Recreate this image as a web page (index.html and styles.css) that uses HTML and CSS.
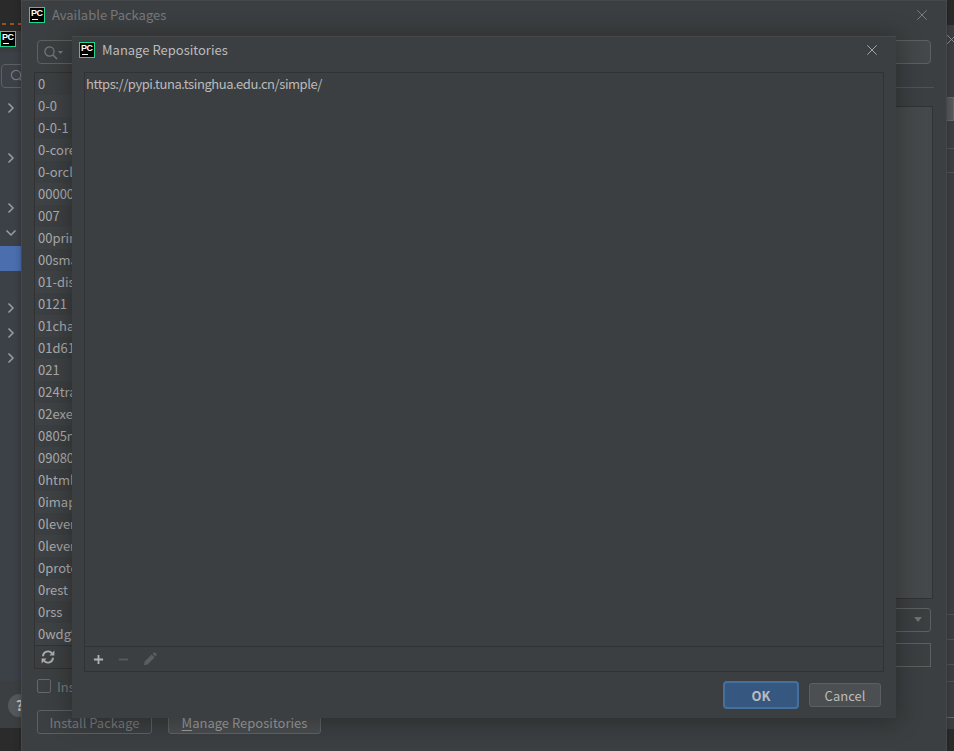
FILE: index.html
```html
<!DOCTYPE html>
<html lang="en">
<head>
<meta charset="utf-8">
<title>Manage Repositories</title>
<link rel="stylesheet" href="styles.css">
</head>
<body>
<svg class="defs" width="0" height="0" aria-hidden="true">
  <symbol id="x" viewBox="0 0 14 14"><path d="M1.5 1.5l11 11M12.5 1.5l-11 11" fill="none" stroke="currentColor" stroke-width="1.1"/></symbol>
  <symbol id="chev" viewBox="0 0 8 12"><path d="M1.5 1.5L6 6l-4.5 4.5" fill="none" stroke="currentColor" stroke-width="1.5"/></symbol>
</svg>

<div class="ide">
  <div class="ide-top"><span class="orange"></span></div>
  <div class="ide-title"><span class="pc pc-ide"><b>PC</b><i></i></span></div>
  <div class="ide-side">
    <span class="side-search"><svg class="side-loupe" viewBox="0 0 14 14"><circle cx="6" cy="6" r="4.6" fill="none" stroke="currentColor" stroke-width="1.2"/><path d="M9.5 9.5l4 4" stroke="currentColor" stroke-width="1.4"/></svg></span>
    <svg class="chev c1"><use href="#chev"/></svg>
    <svg class="chev c2"><use href="#chev"/></svg>
    <svg class="chev c3"><use href="#chev"/></svg>
    <svg class="chev c4" viewBox="0 0 12 8"><path d="M1.5 1.5L6 6l4.5-4.5" fill="none" stroke="currentColor" stroke-width="1.5"/></svg>
    <span class="side-selected"></span>
    <svg class="chev c5"><use href="#chev"/></svg>
    <svg class="chev c6"><use href="#chev"/></svg>
    <svg class="chev c7"><use href="#chev"/></svg>
  </div>
  <div class="ide-foot"><span class="help">?</span></div>
  <div class="ide-bottom"></div>
  <svg class="ide-close"><use href="#x"/></svg>
  <div class="ide-right"><span class="r-btn"></span><span class="r-line l1"></span><span class="r-line l2"></span><span class="r-line l3"></span><span class="r-line l4"></span><span class="r-line l5"></span><span class="r-line l6"></span><span class="r-line l7"></span></div>
</div>

<section class="dialog packages">
  <header class="titlebar">
    <span class="pc"><b>PC</b><i></i></span>
    <span class="title dim">Available Packages</span>
    <svg class="close dimx"><use href="#x"/></svg>
  </header>
  <div class="search">
    <svg class="loupe" viewBox="0 0 20 16"><circle cx="6.5" cy="6.5" r="4.6" fill="none" stroke="currentColor" stroke-width="1.2"/><path d="M10 10l4 4" stroke="currentColor" stroke-width="1.4"/><path d="M15 6h5l-2.5 3z" fill="currentColor"/></svg>
  </div>
  <div class="columns">
    <div class="list-wrap">
      <ul class="pkg-list">
        <li>0</li><li>0-0</li><li>0-0-1</li><li>0-core</li><li>0-orcl</li><li>00000</li><li>007</li><li>00print</li><li>00smalinux</li><li>01-distance</li><li>0121</li><li>01changer</li><li>01d61084</li><li>021</li><li>024travis</li><li>02exercicio</li><li>0805nexter</li><li>09080706</li><li>0html</li><li>0imap</li><li>0lever-so</li><li>0lever-utils</li><li>0proto</li><li>0rest</li><li>0rss</li><li>0wdg9nbm</li>
      </ul>
      <div class="list-tools">
        <svg class="refresh" viewBox="0 0 14 14"><path d="M2 6.2A5 5 0 0 1 11 3.4M12 7.8A5 5 0 0 1 3 10.6" fill="none" stroke="currentColor" stroke-width="1.9"/><path d="M8.4 5.4h5V.6zM5.6 8.6h-5v4.8z" fill="currentColor"/></svg>
      </div>
    </div>
    <div class="detail">
      <div class="detail-rule"></div>
      <div class="detail-box"></div>
      <div class="detail-select"><span class="caret"></span></div>
      <div class="detail-input"></div>
    </div>
  </div>
  <label class="option"><span class="check"></span><span class="option-text">Install to user's site packages directory</span></label>
  <div class="pkg-actions">
    <span class="btn install">Install Package</span>
    <span class="btn manage"><u>M</u>anage Repositories</span>
  </div>
</section>

<section class="dialog repos">
  <header class="titlebar">
    <span class="pc"><b>PC</b><i></i></span>
    <span class="title">Manage Repositories</span>
    <svg class="close"><use href="#x"/></svg>
  </header>
  <div class="repo-panel">
    <div class="repo-list"><div class="repo-row">https://pypi.tuna.tsinghua.edu.cn/simple/</div></div>
    <div class="repo-tools">
      <svg class="tool" viewBox="0 0 12 12"><path d="M6 1v10M1 6h10" stroke="#afb1b3" stroke-width="2"/></svg>
      <svg class="tool" viewBox="0 0 12 12"><path d="M1 6h10" stroke="#57595a" stroke-width="2"/></svg>
      <svg class="tool pencil" viewBox="0 0 14 14"><path d="M1 13.2l.7-3.6 7-7 2.9 2.9-7 7z" fill="#5b5d5e"/><path d="M9.6 1.7l.9-.9a1.2 1.2 0 0 1 1.7 0l1 1a1.2 1.2 0 0 1 0 1.7l-.9.9z" fill="#5b5d5e"/></svg>
    </div>
  </div>
  <footer class="repo-actions">
    <span class="btn ok">OK</span>
    <span class="btn cancel">Cancel</span>
  </footer>
</section>
</body>
</html>
```
FILE: styles.css
```css
* { box-sizing: border-box; }
html, body { margin: 0; height: 100%; }
body {
  position: relative;
  width: 954px;
  height: 751px;
  overflow: hidden;
  background: #3c3f41;
  font-family: "Noto Sans CJK SC", "Noto Sans", sans-serif;
  font-size: 13px;
  color: #bbbbbb;
}
.defs { position: absolute; }

/* background IDE window */
.ide { position: absolute; inset: 0; display: flex; flex-direction: column; }
.ide-top { height: 31px; background: #2a2a2a; position: relative; flex: none; }
.orange { position: absolute; left: 2px; top: 23px; width: 19px; height: 2px; background: repeating-linear-gradient(90deg, #8f5420 0 4px, transparent 4px 8px); }
.ide-title { height: 21px; background: #3a3c3e; flex: none; }
.ide-side { height: 629px; background: #3c4047; position: relative; flex: none; }
.ide-foot { height: 47px; background: #3c3f41; position: relative; flex: none; }
.ide-bottom { flex: 1; background: #2b2b2b; }
.side-search { position: absolute; left: 1px; top: 12px; width: 30px; height: 24px; border: 1px solid #5e6060; border-radius: 4px; }
.side-loupe { position: absolute; left: 8px; top: 4px; width: 14px; height: 14px; color: #77797b; }
.side-selected { position: absolute; left: 0; top: 194px; width: 22px; height: 25px; background: #4b6eaf; }
.chev { position: absolute; left: 7px; width: 8px; height: 12px; color: #9a9c9e; }
.c1 { top: 50px; } .c2 { top: 100px; } .c3 { top: 150px; }
.c4 { top: 177px; left: 5px; width: 12px; height: 8px; }
.c5 { top: 250px; } .c6 { top: 275px; } .c7 { top: 300px; }
.help { position: absolute; left: 8px; top: 13px; width: 23px; height: 23px; border-radius: 50%; background: #55585a; color: #c4c6c8; font-weight: 700; font-size: 14px; line-height: 23px; text-align: center; }
.ide-close { position: absolute; left: 946px; top: 34px; width: 11px; height: 11px; color: #8f9193; z-index: 1; }
.ide-right { position: absolute; left: 947px; top: 25px; right: 0; bottom: 22px; background: #3c3f41; }
.r-btn { position: absolute; left: -1px; top: 72px; width: 8px; height: 24px; background: #55585a; border: 1px solid #64676a; border-left: 0; }
.r-line { position: absolute; left: 0; right: 0; height: 1px; background: #505254; }
.l1 { top: 123px; } .l2 { top: 147px; } .l3 { top: 589px; } .l4 { top: 614px; } .l5 { top: 639px; } .l6 { top: 656px; }
.l7 { top: 692px; background: #66686a; }

/* dialogs */
.dialog { position: absolute; display: flex; flex-direction: column; background: #3c3f41; }
.packages {
  left: 21px; top: 0; width: 926px; height: 751px;
  border: 1px solid #46484a;
  border-bottom: 0;
  box-shadow: 0 0 6px rgba(0,0,0,.3);
}
.repos {
  left: 72px; top: 36px; width: 824px; height: 682px;
  border-top: 1px solid #46484a;
  box-shadow: 0 2px 22px 3px rgba(0,0,0,.28);
}
.titlebar { display: flex; align-items: center; gap: 7px; flex: none; height: 26px; padding: 0 18px 0 7px; }
.title { flex: 1; line-height: 18px; white-space: nowrap; }
.dim { color: #77797b; }
.close { width: 12px; height: 12px; color: #a8aaac; flex: none; }
.dimx { color: #7f8183; }

/* PC logo */
.pc {
  width: 16px; height: 16px; flex: none;
  position: relative; display: block;
  background: #000;
  border: 1px solid #1fd68f;
  overflow: hidden;
}
.pc b { position: absolute; left: 1px; top: 0; font: 700 9px/10px "Liberation Sans", sans-serif; color: #fff; letter-spacing: -.5px; }
.pc i { position: absolute; left: 2px; bottom: 2px; width: 6px; height: 1px; background: #fff; }

/* packages dialog body */
.packages .titlebar { height: 28px; }
.search {
  margin: 11px 15px 0 15px; height: 24px; flex: none;
  border: 1px solid #5e6060; border-radius: 4px;
  padding: 4px 0 0 5px;
  background: linear-gradient(90deg, #3c3f41 80%, #45484a);
}
.loupe { display: block; width: 20px; height: 16px; color: #77797b; }
.columns { display: flex; flex: none; margin: 8px 13px 0 12px; height: 597px; }
.list-wrap { width: 150px; flex: none; border: 1px solid #323232; display: flex; flex-direction: column; overflow: hidden; }
.pkg-list { list-style: none; margin: 0; padding: 0; flex: none; height: 572px; overflow: hidden; }
.pkg-list li { height: 22px; line-height: 22px; padding-left: 3px; color: #a9abad; white-space: nowrap; }
.pkg-list li:nth-child(odd) { background: #3c3f41; }
.pkg-list li:nth-child(even) { background: #3f4244; }
.list-tools { flex: 1; border-top: 1px solid #323232; padding: 4px 0 0 6px; }
.refresh { display: block; width: 14px; height: 14px; color: #a9abad; }
.detail { flex: 1; position: relative; min-width: 0; }
.detail-rule { position: absolute; right: -1px; top: 15px; width: 120px; height: 1px; background: #505254; }
.detail-box { position: absolute; right: 0; top: 34px; width: 120px; height: 493px; background: linear-gradient(90deg, #3e4143, #474a4b 60%, #45484a); border: 1px solid #323232; }
.detail-select { position: absolute; right: 2px; top: 536px; width: 120px; height: 24px; border: 1px solid #5e6060; border-radius: 3px; }
.caret { position: absolute; right: 8px; top: 8px; border: 4px solid transparent; border-top: 5px solid #6e7072; }
.detail-input { position: absolute; right: 2px; top: 571px; width: 120px; height: 24px; border: 1px solid #5e6060; }
.option { display: flex; align-items: center; gap: 6px; margin: 10px 0 0 15px; height: 14px; flex: none; }
.check { width: 14px; height: 14px; border: 1px solid #66686a; border-radius: 2px; background: #3c3f41; flex: none; }
.option-text { color: #77797b; white-space: nowrap; }
.pkg-actions { display: flex; gap: 16px; margin: 17px 0 0 15px; flex: none; }

.btn { display: flex; align-items: center; justify-content: center; height: 24px; border-radius: 3px; white-space: nowrap; flex: none; }
.install { width: 115px; border: 1px solid #5e6060; color: #77797b; }
.manage { width: 153px; border: 1px solid #5f6163; background: #4a4d4f; color: #9a9c9e; }
.manage u { text-underline-offset: 2px; }

/* repositories dialog body */
.repo-panel { margin: 9px 12px 0 12px; height: 600px; flex: none; border: 1px solid #323232; display: flex; flex-direction: column; }
.repo-list { flex: 1; }
.repo-row { padding-left: 1px; line-height: 22px; height: 22px; color: #bbbbbb; letter-spacing: -.44px; }
.repo-tools { height: 25px; flex: none; border-top: 1px solid #323232; display: flex; align-items: center; gap: 14px; padding-left: 8px; }
.tool { display: block; width: 11px; height: 11px; }
.pencil { width: 14px; height: 14px; }
.repo-actions { display: flex; justify-content: flex-end; gap: 10px; padding: 9px 15px 0 0; flex: none; }
.ok { width: 76px; height: 28px; background: #365880; border: 2px solid #46709c; border-radius: 4px; color: #bbbbbb; font-weight: 700; }
.cancel { width: 72px; height: 24px; margin-top: 2px; background: #4c4f51; border: 1px solid #5e6060; color: #bbbbbb; }
```
